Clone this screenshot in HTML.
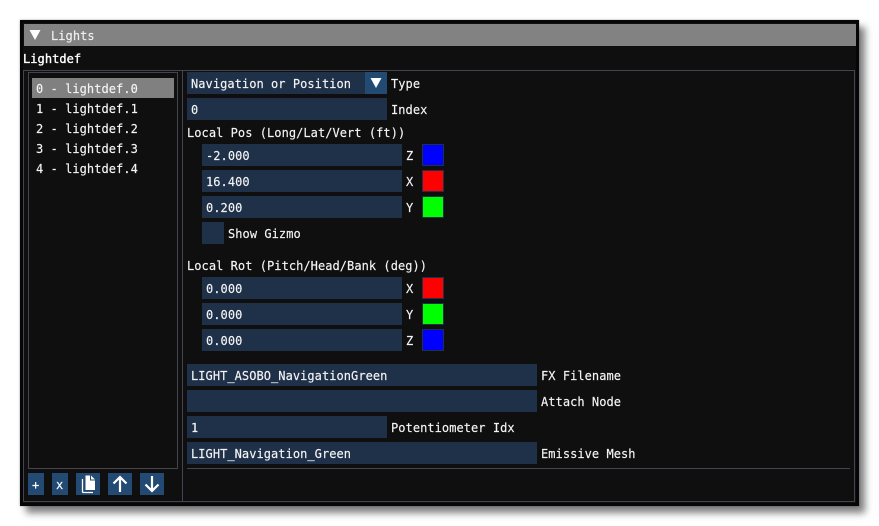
<!DOCTYPE html>
<html>
<head>
<meta charset="utf-8">
<style>
html,body{margin:0;padding:0;background:#fff;}
body{width:879px;height:526px;position:relative;overflow:hidden;font-family:"DejaVu Sans Mono","Liberation Mono",monospace;font-size:12px;color:#f4f4f4;}
div,span{position:absolute;box-sizing:border-box;}
#win{left:20px;top:20px;width:839px;height:486px;background:#0f0f0f;border:3px solid #060606;box-shadow:0 0 2px rgba(0,0,0,.35),6px 7px 7px rgba(0,0,0,.5);}
.t{white-space:pre;line-height:16px;height:16px;letter-spacing:.05px;-webkit-text-stroke:.15px currentColor;}
.f{background:#1f3049;}
.l{background:#44444e;}
.b{background:#234a72;}
.s{border:1px solid #1f3049;width:22px;height:22px;left:422px;}
</style>
</head>
<body>
<div id="win"></div>
<div style="left:24px;top:24px;width:832px;height:22px;background:#828282"></div>
<svg style="position:absolute;left:29px;top:29px" width="13" height="12"><path d="M0.5 1H11.5L6 11Z" fill="#fff"/></svg>
<div class="t" style="left:51px;top:28px;color:#f0f0f0">Lights</div>
<div class="t" style="left:23px;top:51px;-webkit-text-stroke:.35px #fff;color:#fff">Lightdef</div>

<div class="l" style="left:23px;top:70px;width:832px;height:1px"></div>
<div class="l" style="left:23px;top:501px;width:832px;height:1px"></div>
<div class="l" style="left:23px;top:70px;width:1px;height:432px"></div>
<div class="l" style="left:854px;top:70px;width:1px;height:432px"></div>
<div class="l" style="left:182px;top:70px;width:1px;height:432px"></div>
<div style="left:28px;top:72px;width:150px;height:397px;border:1px solid #44444e"></div>
<div class="l" style="left:187px;top:468px;width:663px;height:1px"></div>

<div style="left:32px;top:78px;width:142px;height:20px;background:#808080"></div>
<div class="t" style="left:36px;top:81px">0 - lightdef.0</div>
<div class="t" style="left:36px;top:101px">1 - lightdef.1</div>
<div class="t" style="left:36px;top:121px">2 - lightdef.2</div>
<div class="t" style="left:36px;top:141px">3 - lightdef.3</div>
<div class="t" style="left:36px;top:161px">4 - lightdef.4</div>

<div class="f" style="left:187px;top:72px;width:200px;height:22px"></div>
<div class="b" style="left:365px;top:72px;width:22px;height:22px"></div>
<svg style="position:absolute;left:370px;top:78px" width="12" height="10"><path d="M0.5 0H11.5L6 10Z" fill="#fff"/></svg>
<div class="t" style="left:191px;top:76px">Navigation or Position</div>
<div class="t" style="left:391px;top:76px">Type</div>

<div class="f" style="left:187px;top:98px;width:200px;height:22px"></div>
<div class="t" style="left:191px;top:102px">0</div>
<div class="t" style="left:391px;top:102px">Index</div>

<div class="t" style="left:187px;top:125px">Local Pos (Long/Lat/Vert (ft))</div>

<div class="f" style="left:202px;top:144px;width:200px;height:22px"></div>
<div class="t" style="left:206px;top:148px">-2.000</div>
<div class="t" style="left:406px;top:148px">Z</div>
<div class="s" style="top:144px;background:#0000ff"></div>

<div class="f" style="left:202px;top:170px;width:200px;height:22px"></div>
<div class="t" style="left:206px;top:174px">16.400</div>
<div class="t" style="left:406px;top:174px">X</div>
<div class="s" style="top:170px;background:#ff0000"></div>

<div class="f" style="left:202px;top:196px;width:200px;height:22px"></div>
<div class="t" style="left:206px;top:200px">0.200</div>
<div class="t" style="left:406px;top:200px">Y</div>
<div class="s" style="top:196px;background:#00ff00"></div>

<div class="f" style="left:202px;top:222px;width:22px;height:22px"></div>
<div class="t" style="left:228px;top:226px">Show Gizmo</div>

<div class="t" style="left:187px;top:258px">Local Rot (Pitch/Head/Bank (deg))</div>

<div class="f" style="left:202px;top:277px;width:200px;height:22px"></div>
<div class="t" style="left:206px;top:281px">0.000</div>
<div class="t" style="left:406px;top:281px">X</div>
<div class="s" style="top:277px;background:#ff0000"></div>

<div class="f" style="left:202px;top:303px;width:200px;height:22px"></div>
<div class="t" style="left:206px;top:307px">0.000</div>
<div class="t" style="left:406px;top:307px">Y</div>
<div class="s" style="top:303px;background:#00ff00"></div>

<div class="f" style="left:202px;top:329px;width:200px;height:22px"></div>
<div class="t" style="left:206px;top:333px">0.000</div>
<div class="t" style="left:406px;top:333px">Z</div>
<div class="s" style="top:329px;background:#0000ff"></div>

<div class="f" style="left:187px;top:364px;width:350px;height:22px"></div>
<div class="t" style="left:191px;top:368px">LIGHT_ASOBO_NavigationGreen</div>
<div class="t" style="left:541px;top:368px">FX Filename</div>

<div class="f" style="left:187px;top:390px;width:350px;height:22px"></div>
<div class="t" style="left:541px;top:394px">Attach Node</div>

<div class="f" style="left:187px;top:416px;width:200px;height:22px"></div>
<div class="t" style="left:191px;top:420px">1</div>
<div class="t" style="left:391px;top:420px">Potentiometer Idx</div>

<div class="f" style="left:187px;top:442px;width:350px;height:22px"></div>
<div class="t" style="left:191px;top:446px">LIGHT_Navigation_Green</div>
<div class="t" style="left:541px;top:446px">Emissive Mesh</div>

<div class="b" style="left:28px;top:473px;width:16px;height:22px"></div>
<div class="t" style="left:32px;top:477px;color:#fff">+</div>
<div class="b" style="left:52px;top:473px;width:16px;height:22px"></div>
<div class="t" style="left:56px;top:477px;color:#fff">x</div>
<div class="b" style="left:76px;top:473px;width:24px;height:22px"></div>
<svg style="position:absolute;left:76px;top:473px" width="24" height="22">
<path d="M9.5 2.5H15L19 6.5V17H9.5Z" fill="#fff"/>
<path d="M14.5 2.5V7H19" fill="none" stroke="#234a72" stroke-width="1"/>
<path d="M6.5 6V18.5Q6.5 19.5 7.5 19.5H17" fill="none" stroke="#fff" stroke-width="1.3"/>
</svg>
<div class="b" style="left:108px;top:473px;width:24px;height:22px"></div>
<svg style="position:absolute;left:108px;top:473px" width="24" height="22">
<path d="M12 19V4M5.5 10.5L12 4L18.5 10.5" fill="none" stroke="#fff" stroke-width="2.2"/>
</svg>
<div class="b" style="left:140px;top:473px;width:24px;height:22px"></div>
<svg style="position:absolute;left:140px;top:473px" width="24" height="22">
<path d="M12 3V18M5.5 11.5L12 18L18.5 11.5" fill="none" stroke="#fff" stroke-width="2.2"/>
</svg>
</body>
</html>
